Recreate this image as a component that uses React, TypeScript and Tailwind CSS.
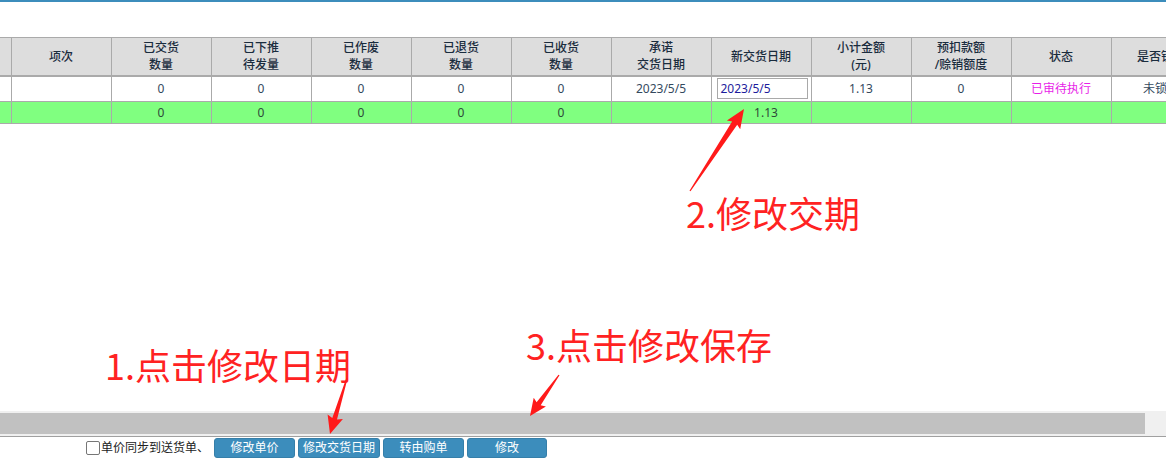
import React from "react";

type Pt = [number, number];

function arrow(t: Pt, h: Pt, hl: number, w1: number, w2: number, back: number): string {
  const dx = h[0] - t[0];
  const dy = h[1] - t[1];
  const L = Math.hypot(dx, dy);
  const ux = dx / L;
  const uy = dy / L;
  const nx = -uy;
  const ny = ux;
  const bx = h[0] - ux * hl;
  const by = h[1] - uy * hl;
  const wx = h[0] - ux * (hl + back);
  const wy = h[1] - uy * (hl + back);
  const pts: Pt[] = [
    [t[0] + nx * 0.6, t[1] + ny * 0.6],
    [bx + nx * w1, by + ny * w1],
    [wx + nx * w2, wy + ny * w2],
    [h[0], h[1]],
    [wx - nx * w2, wy - ny * w2],
    [bx - nx * w1, by - ny * w1],
    [t[0] - nx * 0.6, t[1] - ny * 0.6],
  ];
  return pts.map((p) => `${p[0].toFixed(1)},${p[1].toFixed(1)}`).join(" ");
}

const headers: string[][] = [
  [""],
  ["项次"],
  ["已交货", "数量"],
  ["已下推", "待发量"],
  ["已作废", "数量"],
  ["已退货", "数量"],
  ["已收货", "数量"],
  ["承诺", "交货日期"],
  ["新交货日期"],
  ["小计金额", "(元)"],
  ["预扣款额", "/赊销额度"],
  ["状态"],
  ["是否锁定"],
];

const widths = [11, 100, 100, 100, 100, 100, 100, 100, 100, 100, 100, 100, 100];

const tableFont = { fontFamily: '"Noto Sans", "Noto Sans CJK SC", sans-serif' };

export default function App() {
  return (
    <div
      className="relative w-[1166px] h-[466px] overflow-hidden bg-white flex flex-col"
      style={tableFont}
    >
      <div className="h-[2px] bg-[#3c8dbc] shrink-0" />
      <div className="h-[35px] shrink-0" />
      <div className="overflow-hidden shrink-0">
        <table className="border-collapse table-fixed w-[1211px] text-[12px]">
          <colgroup>
            {widths.map((w, i) => (
              <col key={i} style={{ width: w }} />
            ))}
          </colgroup>
          <thead>
            <tr className="h-[38px] bg-[#dddddd]">
              {headers.map((lines, i) => (
                <th
                  key={i}
                  className={`border border-[#aaaaaa] border-b-2 font-medium text-[#1a2c3e] text-center leading-[17px] p-0 ${
                    i === 0 ? "border-l-0" : ""
                  }`}
                >
                  {lines.map((l, j) => (
                    <div key={j} className="whitespace-nowrap">
                      {l}
                    </div>
                  ))}
                </th>
              ))}
            </tr>
          </thead>
          <tbody>
            <tr className="h-[26px] bg-white text-[#34495e]">
              <td className="border border-[#aaaaaa] border-l-0 p-0" />
              <td className="border border-[#aaaaaa] p-0" />
              <td className="border border-[#aaaaaa] p-0 text-center">0</td>
              <td className="border border-[#aaaaaa] p-0 text-center">0</td>
              <td className="border border-[#aaaaaa] p-0 text-center">0</td>
              <td className="border border-[#aaaaaa] p-0 text-center">0</td>
              <td className="border border-[#aaaaaa] p-0 text-center">0</td>
              <td className="border border-[#aaaaaa] p-0 text-center">2023/5/5</td>
              <td className="border border-[#aaaaaa] p-0 pl-[5px]">
                <div className="w-[91px] h-[21px] border border-[#a9a9a9] bg-white text-[#1c1c9c] text-[12px] leading-[19px] pl-[3px]">
                  2023/5/5
                </div>
              </td>
              <td className="border border-[#aaaaaa] p-0 text-center">1.13</td>
              <td className="border border-[#aaaaaa] p-0 text-center">0</td>
              <td className="border border-[#aaaaaa] p-0 text-center text-[#e81ee8]">已审待执行</td>
              <td className="border border-[#aaaaaa] p-0 text-center whitespace-nowrap">未锁定</td>
            </tr>
            <tr className="h-[22px] bg-[#80ff80] text-[#2f4a3a]">
              <td className="border border-[#aaaaaa] border-l-0 p-0" />
              <td className="border border-[#aaaaaa] p-0" />
              <td className="border border-[#aaaaaa] p-0 text-center">0</td>
              <td className="border border-[#aaaaaa] p-0 text-center">0</td>
              <td className="border border-[#aaaaaa] p-0 text-center">0</td>
              <td className="border border-[#aaaaaa] p-0 text-center">0</td>
              <td className="border border-[#aaaaaa] p-0 text-center">0</td>
              <td className="border border-[#aaaaaa] p-0" />
              <td className="border border-[#aaaaaa] p-0 text-center pl-[10px]">1.13</td>
              <td className="border border-[#aaaaaa] p-0" />
              <td className="border border-[#aaaaaa] p-0" />
              <td className="border border-[#aaaaaa] p-0" />
              <td className="border border-[#aaaaaa] p-0" />
            </tr>
          </tbody>
        </table>
      </div>
      <div className="flex-1" />
      <div className="h-[25px] shrink-0 bg-[#f0f0f0] flex items-center">
        <div className="w-[1145px] h-[21px] bg-[#c1c1c1]" />
      </div>
      <div className="h-[1px] shrink-0 bg-[#a0a0a0]" />
      <div className="h-[29px] shrink-0 flex items-start pt-[1px] pl-[86px] text-[12px]">
        <div className="flex items-center h-[20px]">
          <div className="w-[14px] h-[14px] border border-[#767676] rounded-[2px] bg-white" />
          <span className="ml-[1px] text-[#222222] whitespace-nowrap">单价同步到送货单、</span>
        </div>
        <div className="flex gap-[3px] ml-[5px]">
          {[
            ["修改单价", "w-[81px]"],
            ["修改交货日期", "w-[82px]"],
            ["转由购单", "w-[81px]"],
            ["修改", "w-[80px]"],
          ].map(([t, w]) => (
            <div
              key={t}
              className={`${w} h-[20px] bg-[#3c8dbc] border border-[#367fa9] rounded-[3px] text-white flex items-center justify-center leading-none whitespace-nowrap`}
            >
              {t}
            </div>
          ))}
        </div>
      </div>

      {/* annotations */}
      <div
        className="absolute left-[686px] top-[190px] text-[36px] leading-[44px] text-[#ff2222] whitespace-nowrap"
        style={{ fontFamily: '"Noto Sans CJK SC", sans-serif' }}
      >
        2.修改交期
      </div>
      <div
        className="absolute left-[105px] top-[342px] text-[36px] leading-[44px] text-[#ff2222] whitespace-nowrap"
        style={{ fontFamily: '"Noto Sans CJK SC", sans-serif' }}
      >
        1.点击修改日期
      </div>
      <div
        className="absolute left-[526px] top-[322px] text-[36px] leading-[44px] text-[#ff2222] whitespace-nowrap"
        style={{ fontFamily: '"Noto Sans CJK SC", sans-serif' }}
      >
        3.点击修改保存
      </div>
      <svg className="absolute inset-0 pointer-events-none" width="1166" height="466" viewBox="0 0 1166 466">
        <polygon points={arrow([690, 191], [744, 109], 17, 3, 8, 2)} fill="#ff1a1a" />
        <polygon points={arrow([347, 378], [330, 434], 16, 2.5, 8, 2)} fill="#ff1a1a" />
        <polygon points={arrow([559, 375], [530, 416], 15, 2.5, 7.5, 2)} fill="#ff1a1a" />
      </svg>
    </div>
  );
}
